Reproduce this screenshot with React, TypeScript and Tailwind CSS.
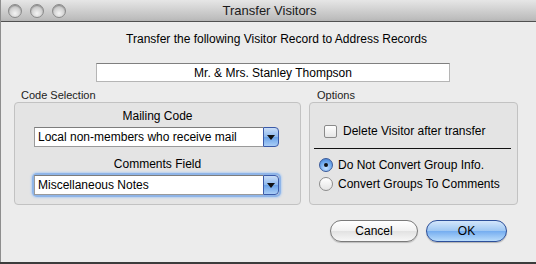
import * as React from 'react';

const font = { fontFamily: '"Lucida Grande", "Liberation Sans", Arial, sans-serif' };

const Light = () => (
  <div className='w-[14px] h-[14px] rounded-full border border-[#8a8a8a] bg-[radial-gradient(circle_at_50%_70%,#f4f4f4_0%,#cfcfcf_55%,#a9a9a9_100%)] shadow-[inset_0_1px_1px_rgba(0,0,0,0.25)]' />
);

const Popup = ({ label, focused }: { label: string; focused?: boolean }) => (
  <div className={'flex h-[20px] w-[245px] rounded-[3px] ' + (focused ? 'shadow-[0_0_0_2px_#8fb5e8,0_0_2px_3px_#b7d0f0]' : '')}>
    <div className='flex-1 bg-white border-y border-l border-[#9a9a9a] border-t-[#7d7d7d] flex items-center pl-[3px] text-[12px] text-black leading-none'>
      {label}
    </div>
    <div className='w-[16px] rounded-r-[4px] border border-[#3b5aa8] bg-[linear-gradient(#c9ddf7_0%,#8db8ee_50%,#6aa2e8_51%,#a9cdf6_100%)] flex items-center justify-center'>
      <svg width='8' height='5' viewBox='0 0 8 5'><path d='M0 0h8L4 5z' fill='#111' /></svg>
    </div>
  </div>
);

const Radio = ({ on }: { on?: boolean }) => on ? (
  <div className='w-[14px] h-[14px] rounded-full border border-[#3a5a9a] bg-[radial-gradient(circle_at_50%_75%,#c3e0ff_0%,#6ea8ec_55%,#3d78c9_100%)] flex items-center justify-center'>
    <div className='w-[4px] h-[4px] rounded-full bg-[#111]' />
  </div>
) : (
  <div className='w-[14px] h-[14px] rounded-full border border-[#8c8c8c] bg-[linear-gradient(#ffffff,#e4e4e4)]' />
);

export default function App() {
  return (
    <div className='w-[536px] h-[264px] bg-[#3c3c3c] overflow-hidden' style={font}>
      <div className='h-[262px] bg-[#ececec] border-l border-[#8e8e8e] flex flex-col'>
        <div className='h-[22px] shrink-0 relative border-b border-[#505050] bg-[linear-gradient(#e6e6e6,#bdbdbd_90%,#b4b4b4)] flex items-center justify-center'>
          <div className='absolute left-[7px] top-[4px] flex gap-[8px]'>
            <Light /><Light /><Light />
          </div>
          <span className='text-[13px] text-[#1a1a1a] leading-none pl-[2px]'>Transfer Visitors</span>
        </div>

        <div className='text-[12px] text-black text-center mt-[10px] pl-[16px] leading-[14px]'>
          Transfer the following Visitor Record to Address Records
        </div>

        <div className='mt-[17px] ml-[95px] w-[354px] h-[19px] bg-white border border-[#b5b5b5] border-t-[#7f7f7f] flex items-center justify-center text-[12px] text-black leading-none'>
          Mr. &amp; Mrs. Stanley Thompson
        </div>

        <div className='flex mt-[7px] ml-[13px] gap-[8px]'>
          <div className='w-[287px] flex flex-col'>
            <div className='text-[11px] text-[#222] leading-[13px] pl-[7px]'>Code Selection</div>
            <div className='h-[103px] rounded-[4px] border border-[#c2c2c2] bg-[#e4e4e4] flex flex-col items-center pt-[6px]'>
              <div className='text-[12px] text-black leading-[14px]'>Mailing Code</div>
              <div className='mt-[4px] -ml-[2px]'><Popup label='Local non-members who receive mail' /></div>
              <div className='mt-[10px] text-[12px] text-black leading-[14px]'>Comments Field</div>
              <div className='mt-[4px] -ml-[2px]'><Popup label='Miscellaneous Notes' focused /></div>
            </div>
          </div>

          <div className='w-[209px] flex flex-col'>
            <div className='text-[11px] text-[#222] leading-[13px] pl-[8px]'>Options</div>
            <div className='h-[103px] rounded-[4px] border border-[#c2c2c2] bg-[#e4e4e4] flex flex-col pt-[21px] pl-[9px]'>
              <div className='flex items-center gap-[6px] pl-[5px]'>
                <div className='w-[13px] h-[13px] rounded-[2px] border border-[#8a8a8a] bg-[linear-gradient(#ffffff,#e6e6e6)]' />
                <span className='text-[12px] text-black leading-[14px]'>Delete Visitor after transfer</span>
              </div>
              <div className='mt-[10px] -ml-[5px] mr-[6px] h-px bg-[#111]' />
              <div className='mt-[9px] flex items-center gap-[5px]'>
                <Radio on />
                <span className='text-[12px] text-black leading-[14px]'>Do Not Convert Group Info.</span>
              </div>
              <div className='mt-[5px] flex items-center gap-[5px]'>
                <Radio />
                <span className='text-[12px] text-black leading-[14px]'>Convert Groups To Comments</span>
              </div>
            </div>
          </div>
        </div>

        <div className='flex justify-end gap-[8px] mr-[29px] mt-[15px]'>
          <button className='w-[88px] h-[22px] rounded-full border border-[#7a7a7a] bg-[linear-gradient(#ffffff_0%,#f1f1f1_50%,#e2e2e2_51%,#f7f7f7_100%)] text-[12px] text-black leading-none shadow-[0_1px_1px_rgba(0,0,0,0.2)]'>Cancel</button>
          <button className='w-[81px] h-[22px] rounded-full border border-[#2c4f9a] bg-[linear-gradient(#d3e6fb_0%,#9ec7f3_50%,#75adf0_51%,#b9dcfb_100%)] text-[12px] text-black leading-none shadow-[0_1px_1px_rgba(0,0,0,0.25)]'>OK</button>
        </div>
      </div>
    </div>
  );
}
